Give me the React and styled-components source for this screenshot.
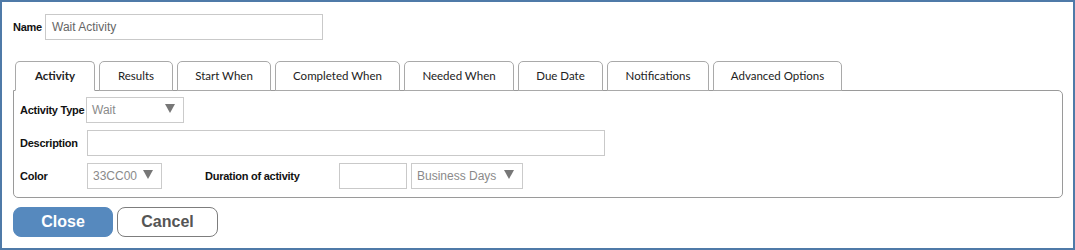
import React from "react";
import styled, { createGlobalStyle } from "styled-components";

const GlobalStyle = createGlobalStyle`
  html, body { margin: 0; padding: 0; background: #ffffff; }
  * { box-sizing: border-box; }
`;

const Frame = styled.div`
  width: 1075px;
  height: 250px;
  border: 2px solid #4f7aa8;
  background: #fff;
  padding: 12px 11px 0 11px;
  font-family: "Liberation Sans", Arial, sans-serif;
`;

const NameRow = styled.div`
  display: flex;
  align-items: center;
`;

const Label = styled.label`
  font-size: 11px;
  font-weight: bold;
  color: #111;
  letter-spacing: -0.25px;
  width: ${(p) => (p.$w ? `${p.$w}px` : "auto")};
  margin-left: ${(p) => (p.$ml ? `${p.$ml}px` : "0")};
  flex-shrink: 0;
`;

const TextInput = styled.div`
  width: ${(p) => p.$w}px;
  height: 26px;
  border: 1px solid #c9c9c9;
  background: #fff;
  display: flex;
  align-items: center;
  padding-left: 6px;
  font-size: 12px;
  color: #666;
  flex-shrink: 0;
`;

const TabBar = styled.div`
  display: flex;
  gap: 4px;
  margin-top: 21px;
  padding-left: 2px;
  position: relative;
  z-index: 1;
`;

const Tab = styled.div`
  width: ${(p) => p.$w}px;
  height: 30px;
  border: 1px solid #a9a9a9;
  border-bottom: 1px solid ${(p) => (p.$active ? "#fff" : "#a9a9a9")};
  border-radius: 5px 5px 0 0;
  background: #fff;
  display: flex;
  align-items: center;
  justify-content: center;
  padding-bottom: 1px;
  font-family: Lato, "Open Sans", sans-serif;
  font-size: 11.5px;
  font-weight: ${(p) => (p.$active ? 700 : 400)};
  color: #222;
  margin-bottom: -1px;
`;

const Panel = styled.div`
  width: 1050px;
  height: 108px;
  border: 1px solid #9a9a9a;
  border-radius: 0 5px 5px 5px;
  padding: 6px 6px 0 6px;
  display: flex;
  flex-direction: column;
  gap: 7px;
`;

const Row = styled.div`
  display: flex;
  align-items: center;
`;

const Select = styled.div`
  width: ${(p) => p.$w}px;
  height: 26px;
  border: 1px solid #cbcbcb;
  background: #fff;
  display: flex;
  align-items: center;
  justify-content: space-between;
  padding: 0 8px 0 5px;
  font-size: 12px;
  color: #8a8a8a;
  flex-shrink: 0;
  margin-left: ${(p) => (p.$ml ? `${p.$ml}px` : "0")};
`;

const Caret = styled.span`
  width: 0;
  height: 0;
  border-left: 5px solid transparent;
  border-right: 5px solid transparent;
  border-top: 9px solid #777;
  margin-top: -3px;
`;

const ButtonRow = styled.div`
  display: flex;
  gap: 4px;
  margin-top: 9px;
`;

const Button = styled.button`
  width: ${(p) => p.$w}px;
  height: 30px;
  border-radius: 8px;
  font-family: "Liberation Sans", Arial, sans-serif;
  font-size: 16px;
  font-weight: bold;
  cursor: pointer;
  border: 1px solid ${(p) => (p.$primary ? "#5689be" : "#7d7d7d")};
  background: ${(p) => (p.$primary ? "#5689be" : "#fff")};
  color: ${(p) => (p.$primary ? "#fff" : "#555")};
  padding: 0;
`;

const tabs = [
  ["Activity", 80],
  ["Results", 74],
  ["Start When", 94],
  ["Completed When", 125],
  ["Needed When", 110],
  ["Due Date", 85],
  ["Notifications", 102],
  ["Advanced Options", 129],
];

export default function App() {
  return (
    <>
      <GlobalStyle />
      <Frame>
        <NameRow>
          <Label $w={32}>Name</Label>
          <TextInput $w={278}>Wait Activity</TextInput>
        </NameRow>
        <TabBar>
          {tabs.map(([t, w], i) => (
            <Tab key={t} $w={w} $active={i === 0}>
              {t}
            </Tab>
          ))}
        </TabBar>
        <Panel>
          <Row>
            <Label $w={66}>Activity Type</Label>
            <Select $w={98}>
              Wait
              <Caret />
            </Select>
          </Row>
          <Row>
            <Label $w={67}>Description</Label>
            <TextInput $w={518} />
          </Row>
          <Row>
            <Label $w={67}>Color</Label>
            <Select $w={75}>
              33CC00
              <Caret />
            </Select>
            <Label $w={134} $ml={43}>
              Duration of activity
            </Label>
            <TextInput $w={68} />
            <Select $w={112} $ml={4}>
              Business Days
              <Caret />
            </Select>
          </Row>
        </Panel>
        <ButtonRow>
          <Button $w={100} $primary>
            Close
          </Button>
          <Button $w={101}>Cancel</Button>
        </ButtonRow>
      </Frame>
    </>
  );
}
